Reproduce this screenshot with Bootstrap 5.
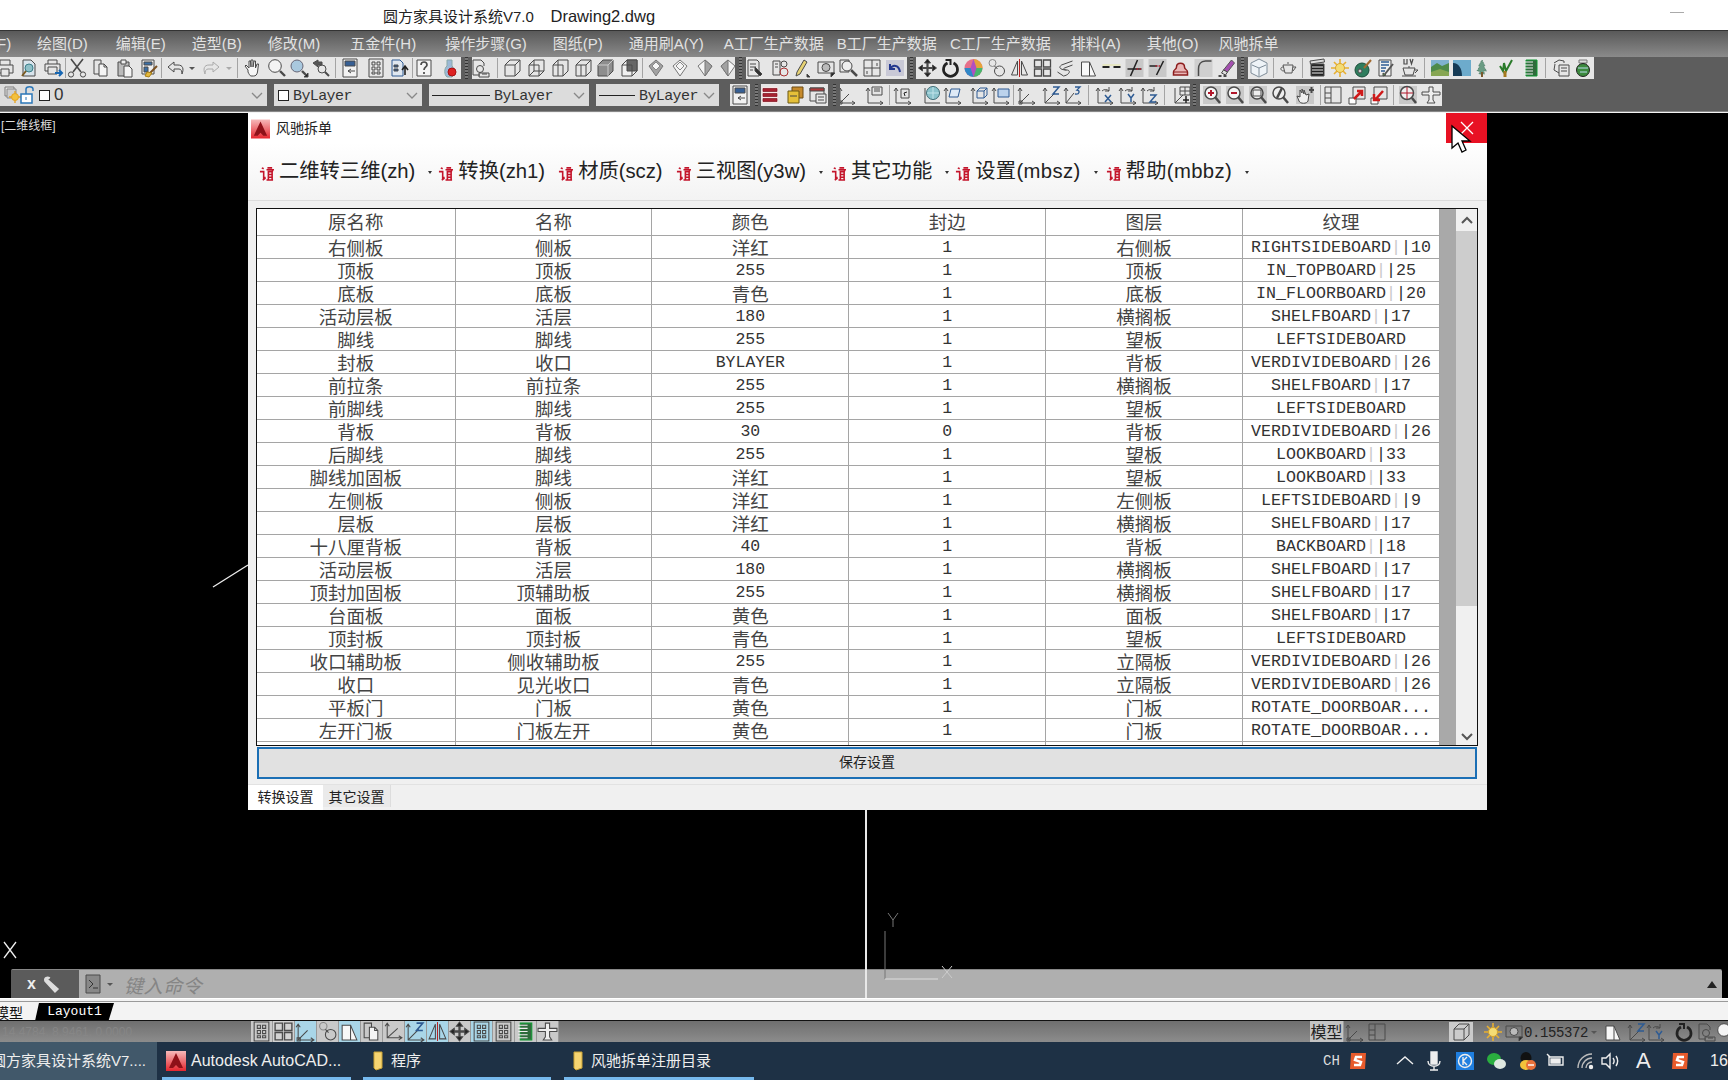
<!DOCTYPE html>
<html lang="zh"><head><meta charset="utf-8"><title>圆方家具设计系统</title>
<link rel="stylesheet" href="https://cdn.jsdelivr.net/npm/bootstrap@5.3.0/dist/css/bootstrap.min.css">
<style>
html,body{height:100%}
body{font-family:"Liberation Sans","Noto Sans CJK SC",sans-serif;background:#000;overflow:hidden;height:1080px;position:relative}
.tbar{height:30px;background:#fff;font:15px/32px "Liberation Sans","Noto Sans CJK SC",sans-serif;color:#222;padding-left:383px;white-space:pre;position:relative}
.tbar i{position:absolute;left:1670px;top:12px;width:14px;height:1px;background:#aaa}
.tbar b{font-weight:400;font-size:16.5px}
.mbar{height:27px;border-top:1px solid #333;background:linear-gradient(#595959,#8a8a8a);color:#e2e2e2;font-size:15px;line-height:25px;white-space:nowrap;padding-left:37px;overflow:hidden;position:relative}
.mbar span{margin-right:26px;font-family:"Liberation Sans","Noto Sans CJK SC",sans-serif}
.mbar .mf{position:absolute;left:-8px;margin:0}
.mbar .w13{margin-right:13px}.mbar .w20{margin-right:20px}.mbar .w28{margin-right:28px}.mbar .w30{margin-right:30px}.mbar .w29{margin-right:29px}
.tools{height:55px;background:#5d5d5d;border-bottom:1px solid #888}
.trow{height:22px;position:absolute;left:0;right:0}
.trow.r1{top:57px}.trow.r2{top:84px}
.seg{height:22px;background:#e6e6e6;overflow:hidden;flex:none;align-items:center;display:flex}
.s1{width:461px}.s2{width:263px}.s3{width:161px}.s4{width:321px}.s5{width:346px}
.c1{width:267px}.c2{width:148px}.c3{width:160px}.c4{width:123px}.c5{width:20px}.c6{width:67px}.c7{width:350px}.c8{width:242px}
.grip{width:11px;height:22px;flex:none;background:repeating-linear-gradient(#333 0 1px,#777 1px 3px) center/3px 100% no-repeat}
.grip.gw8{width:8px}.grip.gw9{width:9px}
.ti{width:24px;height:20px;flex:none;fill:none;stroke:#4a4a4a;stroke-width:1}
.p23 .ti{width:23px}
.sp{width:1px;height:20px;background:#a4a4a4;flex:none;margin-right:-1px}
.dr{width:8px;height:20px;flex:none;fill:#555;stroke:none}
.dr.lt{fill:#aaa}
.hb{background:#cbcbcb}
.g1{margin-left:1px}.g2{margin-left:2px}.g3{margin-left:3px}.g4{margin-left:4px}.g5{margin-left:5px}.g6{margin-left:6px}.g7{margin-left:7px}.g8{margin-left:8px}
.n1{margin-left:-1px}.n2{margin-left:-2px}.n3{margin-left:-3px}.n4{margin-left:-4px}.n5{margin-left:-5px}.n7{margin-left:-7px}.n9{margin-left:-9px}
.cmb{font:15px/22px "Liberation Mono","Noto Sans CJK SC",monospace;color:#333;background:#dcdcdc;position:relative;letter-spacing:-.6px}
.cmb>span{padding-top:3px}
.cmb .chev{position:absolute;right:4px;top:5px;width:12px;height:12px;fill:none;stroke:#888;stroke-width:1.3}
.cmb .sq{width:11px;height:11px;border:1px solid #222;background:#fff;flex:none}
.cmb .ln{height:1px;background:#222;flex:none}
.cmb .zero{font:17px/22px "Liberation Sans",sans-serif;color:#333;padding:0}
.ln58{width:58px}.ln36{width:36px}
.divd{width:7px;flex:none}
.view{position:absolute;left:0;right:0;top:112px;bottom:0;background:#000;border-top:1px solid #f3f3f3}
.vtxt{position:absolute;left:1px;top:4px;color:#ddd;font-size:12px;line-height:18px}
.cross{position:absolute;left:865px;top:113px;height:885px;width:2px;background:#e8e8e8}
.art{position:absolute;left:0;top:113px;width:1728px;height:900px;pointer-events:none}
.cmd{position:absolute;left:11px;top:969px;width:1711px;height:29px;background:#afafaf;border-top:1px solid #888;display:flex;align-items:center;border-radius:2px 2px 0 0}
.cmd .dk{width:68px;height:100%;background:#5b5b5b;color:#eee;display:flex;align-items:center;flex:none}
.cmd em{font:italic 19px "Noto Sans CJK SC",sans-serif;color:#858585;margin-left:10px;letter-spacing:.6px}
.cmd .up{margin-left:auto;margin-right:5px;width:10px;height:8px;fill:#222}
.dlg{position:absolute;left:248px;top:113px;width:1239px;height:697px;background:#f0f0f0;display:flex;flex-direction:column}
.dt{height:30px;background:#fff;font-size:14px;color:#222;display:flex;align-items:center;padding-left:3px;padding-top:1px;flex:none}
.dt svg{margin-right:6px}
.xbtn{position:absolute;right:0;top:0;width:41px;height:30px;background:#e81123;color:#fff;display:flex;align-items:center;justify-content:center}
.dm{height:58px;flex:none;background:linear-gradient(#fff,#f3f3f3);border-bottom:1px solid #dcdcdc;display:flex;align-items:center;font:20.3px/1 "Liberation Sans","Noto Sans CJK SC",sans-serif;color:#222;padding-left:11px;white-space:nowrap}
.dm .rm{width:15px;height:17px;flex:none;margin-right:5px;margin-top:3px;stroke:#c4152b;fill:none;stroke-width:1.7}
.dm .dot{width:4px;height:4px;flex:none;fill:#333;margin-left:13px;margin-right:6px}
.dm .wo{margin-right:13px}
.dm .lsp{letter-spacing:.35px}
.dm .rm.sh2{margin-left:2px}
.frame{margin:7px 9px 0 8px;height:538px;border:1.5px solid #111;background:#fff;display:flex;overflow:hidden;flex:none}
.tblwrap{width:1183px;overflow:hidden;flex:none;height:100%}
.cad-table{table-layout:fixed;width:1183px;border-collapse:collapse;margin:0;font:18.5px/22px "Noto Sans CJK SC",sans-serif;color:#444}
.cad-table th,.cad-table td{border:1px solid #a5a5a5;border-top:0;padding:0;height:23px;text-align:center;font-weight:400;overflow:hidden;white-space:nowrap;color:#444;box-shadow:none;background:#fff}
.cad-table th{height:26px;line-height:24px;vertical-align:top}
.cad-table th:first-child,.cad-table td:first-child{border-left:0;width:198px}
.cad-table td.m{font:16.67px/20px "Liberation Mono",monospace;color:#333;padding-top:2px}
.cad-table td.m b{font-weight:400;color:#c9c9c9}
.cad-table td.n{font:16.5px/20px "Liberation Mono",monospace;color:#333;padding-top:2px}
.band{width:16px;background:#a9a9a9;flex:none}
.sb{width:21px;background:#f0f0f0;flex:none;display:flex;flex-direction:column;position:relative}
.sb svg{width:14px;height:9px;margin:7px auto;fill:none;stroke:#555;stroke-width:2;flex:none}
.sb .th{height:375px;background:#cdcdcd;flex:none;margin-top:-1px}
.sb .dn{margin-top:auto;margin-bottom:4px}
.save{margin:1px 10px 0 9px;height:32px;flex:none;border:2px solid #1b6fb5;background:#e1e1e1;border-radius:0;font:14px/22px "Noto Sans CJK SC",sans-serif;color:#222;padding:0 0 5px;width:1220px}
.save:hover{background:#e1e1e1}
.dtabs{margin-top:5px;border-top:1px solid #e2e2e2;height:26px;display:flex;font-size:14px;color:#222;padding-left:0;line-height:22px;font-family:"Noto Sans CJK SC",sans-serif;flex:none}
.dtabs span{width:75px;text-align:center;background:#fff}
.dtabs span+span{width:68px;background:#eaeaea;border-right:1px solid #ddd;height:22px}
.lay{position:absolute;left:0;right:0;top:998px;height:22px;background:#f3f3f3;border-top:1px solid #fff;display:flex}
.lay::before{content:"";position:absolute;left:0;right:0;top:2px;height:1px;background:#9a9a9a}
.lay .mx{position:absolute;left:-5px;top:4px;font:14px/18px "Noto Sans CJK SC",sans-serif;color:#111}
.lay .lo{position:absolute;left:35px;top:4px;width:79px;height:18px;background:#000;color:#fff;font:13px/18px "Liberation Mono",monospace;text-align:center;clip-path:polygon(5% 0,100% 0,93% 100%,0 100%)}
.stat{position:absolute;left:0;right:0;top:1020px;height:22px;border-top:1px solid #111;background:linear-gradient(#6f6f6f,#8c8c8c);display:flex;align-items:center;overflow:hidden}
.coord{color:#868686;font-size:12px;width:251px;flex:none;padding-left:2px;white-space:nowrap}
.stc{background:#c9c9c9;height:21px;flex:none;display:flex}
.stc .ti{width:22px;height:21px;border-right:1px solid #999}
.stc .on{background:#a9d6e8}
.sts{background:#d2d2d2}
.mdl{width:34px;font:16px/21px "Noto Sans CJK SC",sans-serif;color:#222;text-align:center;flex:none;margin-left:751px;background:#c4c4c4;border-right:1px solid #999}
.g60{margin-left:60px}
.scale{font:14px/21px "Liberation Mono",monospace;color:#222;letter-spacing:-.4px;flex:none;margin-left:-2px;padding-top:3px}
.task{position:absolute;left:0;right:0;top:1042px;height:38px;background:#1e3145;color:#eee;font-size:16px;display:flex;align-items:center}
.tk{height:38px;display:flex;align-items:center;flex:none;white-space:nowrap;overflow:hidden;position:relative;font-family:"Liberation Sans","Noto Sans CJK SC",sans-serif}
.tk::after{content:"";position:absolute;left:2px;right:2px;bottom:0;height:3px;background:#76b9ed}
.t0{width:157px;background:#41586a;margin-right:3px;justify-content:flex-end;font-size:15px;padding-right:11px}
.t0::after{display:none}
.t1{width:193px;padding-left:6px;margin-right:8px}
.t2{width:192px;padding-left:11px;margin-right:9px;font-size:15px}
.t3{width:194px;padding-left:10px;font-size:15px}
.tk svg{flex:none;margin-right:5px}
.tray{display:flex;align-items:center;height:38px;white-space:nowrap;position:absolute;left:1320px;right:0;overflow:hidden}
.tray svg{position:absolute;top:9px;width:20px;height:20px;fill:none;stroke:#eee;stroke-width:1.4}
.tray .chs{position:absolute;left:3px;top:9px;font:14px/20px "Liberation Mono",monospace;color:#ddd}
.tray .big{position:absolute;left:316px;top:7px;font:22px/24px "Liberation Sans",sans-serif;color:#eee}
.tray .hr{position:absolute;left:390px;top:9px;font:16px/20px "Liberation Sans",sans-serif}
.sicon{fill:#e0532a!important;stroke:none!important}
.l14{left:28px}.l85{left:75px}.l114{left:104px}.l145{left:135px}.l175{left:166px}.l206{left:197px}.l236{left:226px}.l265{left:255px}.l290{left:280px}.l350{left:350px}
.nstroke{stroke:none!important}
#curs{left:1450px;top:124px}
</style></head><body>
<svg width="0" height="0" class="position-absolute">
<defs>
<linearGradient id="ar" x1="0" y1="0" x2="0" y2="1"><stop offset="0" stop-color="#f6b9b9"/><stop offset="1" stop-color="#e5262e"/></linearGradient>
<symbol id="print" viewBox="0 0 20 20"><path d="M5 7V2h10v5M6 15H2V7h16v8h-4M6 11h8v7H6z"/></symbol>
<symbol id="docp" viewBox="0 0 20 20"><path d="M4 2h8l4 4v12H4z" fill="#d8e4ec"/><circle cx="10" cy="10" r="4" fill="#8fc0c8" stroke="#3b7f8a"/><path d="M7 13l-4 5" stroke="#7a5a20" stroke-width="2"/></symbol>
<symbol id="pmail" viewBox="0 0 20 20"><path d="M5 6V2h9v4M5 13H2V6h15v6M5 9h9v7H5z"/><path d="M12 15h6M16 12l3 3-3 3" stroke="#1767b3" stroke-width="2"/></symbol>
<symbol id="cut" viewBox="0 0 20 20"><path d="M4 1l10 13M16 1L6 14" stroke-width="1.600"/><ellipse cx="4" cy="16.500" rx="2.600" ry="2.600"/><ellipse cx="16" cy="16.500" rx="2.600" ry="2.600"/></symbol>
<symbol id="copy" viewBox="0 0 20 20"><path d="M3 2h7v14H3z"/><path d="M8 6h5l3 3v9H8z" fill="#f4f4f4"/><path d="M13 6v3h3"/></symbol>
<symbol id="paste" viewBox="0 0 20 20"><path d="M3 4h11v14H3z" fill="#bbb"/><path d="M6 2h5v4H6z" fill="#eee"/><path d="M9 8h5l3 3v8H9z" fill="#f4f4f4"/></symbol>
<symbol id="bdoc" viewBox="0 0 20 20"><path d="M3 2h12v14H3z" fill="#eee"/><path d="M5 4h8v3H5z" fill="#3a6ea5"/><path d="M5 9h4v5H5z" fill="#3a6ea5"/><path d="M18 8l-7 7" stroke="#7a5020" stroke-width="2"/><path d="M8 14l5 1-3 4-4-1z" fill="#e5b93c" stroke="#a97f12"/></symbol>
<symbol id="undo" viewBox="0 0 20 20"><path d="M8 4L2 9l6 5v-3h5c2 0 3 2 3 5 2-5 1-9-4-9H8z"/></symbol>
<symbol id="redo" viewBox="0 0 20 20"><path d="M12 4l6 5-6 5v-3H7c-2 0-3 2-3 5-2-5-1-9 4-9h4z" stroke="#aaa"/></symbol>
<symbol id="tri" viewBox="0 0 8 20"><path d="M1 9h6l-3 3z"/></symbol>
<symbol id="hand" viewBox="0 0 20 20"><path d="M5 12L2 8l1-1 3 3V3h1.500l.5 6V2h2v7l1-6h1.500v7l1.500-4h1.500l-1 8c-.5 3-2 4-4 4H8c-1 0-2-2-3-4z" fill="#f6f6f6"/></symbol>
<symbol id="mag" viewBox="0 0 20 20"><circle cx="8" cy="8" r="6.300" fill="#f4f4f4"/><path d="M13 13l5 5" stroke-width="2.400"/></symbol>
<symbol id="mag2" viewBox="0 0 20 20"><circle cx="8" cy="8" r="6" fill="#a9c8de" stroke="#667"/><path d="M13 13l4 4" stroke-width="2.400"/><path d="M19 15v4h-4z" fill="#222"/></symbol>
<symbol id="zprev" viewBox="0 0 20 20"><path d="M2 5l5-3v2h4v3H7v2z" fill="#555"/><circle cx="11" cy="11" r="4"/><path d="M14 14l4 4" stroke-width="2"/></symbol>
<symbol id="props" viewBox="0 0 20 20"><path d="M3 1h14v18H3z" fill="#f2f2f2"/><path d="M5 3h10v5H5z" fill="#365f94"/><path d="M8 13H15M8 13l3-2M8 13l3 2"/></symbol>
<symbol id="grid" viewBox="0 0 20 20"><path d="M3 1h14v18H3zM6 4h3v3H6zM11 4h3v3h-3zM6 9h3v3H6zM11 9h3v3h-3zM6 14h3v2H6zM11 14h3v2h-3z"/></symbol>
<symbol id="dcar" viewBox="0 0 20 20"><path d="M2 2h8l3 3v13H2z" fill="#dfe7f0" stroke="#2e5b93"/><path d="M4 7h4v2H4zM4 11h4v2H4z" fill="#2e5b93"/><path d="M15 8v9M12 12l3-4 3 4" stroke="#222" stroke-width="1.600"/></symbol>
<symbol id="help" viewBox="0 0 20 20"><path d="M3 2h14v16H3z" fill="#f4f4f4"/><path d="M7 7c0-4 6-4 6 0 0 2-3 2-3 5M10 14v2" stroke-width="1.700"/></symbol>
<symbol id="bott" viewBox="0 0 20 20"><path d="M7 2h5v6c3 2 3 9 0 11H7C4 17 4 10 7 8z" fill="#9db9d6" stroke="#8aa"/><circle cx="12" cy="14" r="4" fill="#d22" stroke="#a11"/></symbol>
<symbol id="dsh" viewBox="0 0 20 20"><path d="M2 2h8l3 3v3M2 2v15h7"/><circle cx="9" cy="11" r="3.500"/><path d="M8 15h10v4H8zM11 16h5"/></symbol>
<symbol id="cb1" viewBox="0 0 20 20"><path d="M3 7l5-5h10v11l-5 5H3zM3 7h10v11M13 7l5-5"/></symbol>
<symbol id="cb2" viewBox="0 0 20 20"><path d="M3 7l5-5h10v11l-5 5H3zM3 18l5-5h10M8 2v11"/><path d="M3 7h10v11"/></symbol>
<symbol id="cb3" viewBox="0 0 20 20"><path d="M3 7l5-5h10v11l-5 5H3zM3 7h10v11M8 2l0 16"/></symbol>
<symbol id="cb4" viewBox="0 0 20 20"><path d="M3 7l5-5h10v11l-5 5H3zM13 7v11M13 7l5-5M3 7h10"/><path d="M8 7v11"/></symbol>
<symbol id="cb5" viewBox="0 0 20 20"><path d="M3 7l5-5h10v11l-5 5H3z" fill="#8e8e8e"/><path d="M3 7h10v11M13 7l5-5" stroke="#ccc"/></symbol>
<symbol id="cb6" viewBox="0 0 20 20"><path d="M3 7l5-5h10v11l-5 5H3z" fill="#f0f0f0"/><path d="M8 2h10v11H8z" fill="#666"/><path d="M3 7h10v11"/></symbol>
<symbol id="di1" viewBox="0 0 20 20"><path d="M10 2l7 6-7 10-7-10z" fill="#a2a2a2" stroke="#777"/><path d="M6 8l4-4 4 4-4 4z" fill="#f5f5f5" stroke="#888"/></symbol>
<symbol id="di2" viewBox="0 0 20 20"><path d="M10 2l7 6-7 10-7-10z" fill="#f5f5f5" stroke="#777"/><path d="M10 4l4 4-4 4-4-4z" fill="#f5f5f5" stroke="#888"/></symbol>
<symbol id="di3" viewBox="0 0 20 20"><path d="M10 2l7 6-7 10-7-10z" fill="#f5f5f5" stroke="#777"/><path d="M10 2l7 6-7 10z" fill="#a2a2a2" stroke="#777"/></symbol>
<symbol id="di4" viewBox="0 0 20 20"><path d="M10 2l7 6-7 10-7-10z" fill="#f5f5f5" stroke="#777"/><path d="M10 2L3 8l7 10z" fill="#a2a2a2" stroke="#777"/></symbol>
<symbol id="lst" viewBox="0 0 20 20"><path d="M4 2h9l2 2v14H4zM6 6h6M6 9h6M6 12h3"/><path d="M11 9l7 7-2 2-5-5z" fill="#333"/></symbol>
<symbol id="lwh" viewBox="0 0 20 20"><path d="M3 3h7v14H3zM5 6h3M5 9h3"/><circle cx="14" cy="6" r="3"/><circle cx="14" cy="14" r="4" stroke="#a33"/></symbol>
<symbol id="pen" viewBox="0 0 20 20"><path d="M12 2l3 2-7 12-4 2 1-4z" fill="#e6d273"/><path d="M15 16v3h3z" fill="#222"/></symbol>
<symbol id="cam" viewBox="0 0 20 20"><path d="M2 4h16v11H2z"/><circle cx="10" cy="9.500" r="4" fill="#bbb"/><path d="M15 15v4l4-4z" fill="#222"/></symbol>
<symbol id="magb" viewBox="0 0 20 20"><path d="M2 2h9v12H2z"/><circle cx="9" cy="8" r="5" fill="#eee"/><path d="M13 12l6 6" stroke-width="2.500"/></symbol>
<symbol id="win4" viewBox="0 0 20 20"><path d="M2 2h16v16H2zM10 2v16M2 10h16M5 13v3M15 5v3"/></symbol>
<symbol id="lundo" viewBox="0 0 20 20"><path d="M1 2h18v16H1z" fill="#c9c9d6" stroke="none"/><path d="M5 6v5h5M5 11c3-5 9-4 10 3" stroke="#24388f" stroke-width="2"/></symbol>
<symbol id="move" viewBox="0 0 20 20"><path d="M10 2v16M2 10h16" stroke-width="2.200"/><path d="M10 1l-3 4h6zM10 19l-3-4h6zM1 10l4-3v6zM19 10l-4-3v6z" fill="#222"/></symbol>
<symbol id="rot" viewBox="0 0 20 20"><path d="M7 5a7 7 0 1 0 6 0" stroke-width="2.700" stroke="#222"/><path d="M5 2h5v5" stroke-width="2" stroke="#222"/></symbol>
<symbol id="whl" viewBox="0 0 20 20"><circle cx="10" cy="10" r="9" fill="#e6708a" stroke="none"/><path d="M10 10V1a9 9 0 0 1 9 9z" fill="#e6a33a" stroke="none"/><path d="M10 10h9a9 9 0 0 1-9 9z" fill="#47b66c" stroke="none"/><path d="M10 10v9a9 9 0 0 1-9-9z" fill="#2f87c7" stroke="none"/><path d="M10 1l3 9-3 9-3-9z" fill="#b24fc0" stroke="none"/></symbol>
<symbol id="cpo" viewBox="0 0 20 20"><circle cx="6" cy="5" r="3.500" stroke="#888"/><circle cx="13" cy="13" r="5"/><path d="M8 8l3 3"/></symbol>
<symbol id="mir" viewBox="0 0 20 20"><path d="M8 3L2 17h6zM12 3l6 14h-6z"/><path d="M10 1v18" stroke="#b22"/></symbol>
<symbol id="arr" viewBox="0 0 20 20"><path d="M2 2h7v7H2zM11 2h7v7h-7zM2 11h7v7H2zM11 11h7v7h-7z" stroke-width="1.300"/></symbol>
<symbol id="ofs" viewBox="0 0 20 20"><path d="M17 3L6 7c-4 3 0 5 5 5s3 5-3 6M17 7l-8 3c-2 1 0 2 2 2"/><path d="M2 14l6 4"/></symbol>
<symbol id="str" viewBox="0 0 20 20"><path d="M3 4h8l6 14H3z" fill="#f8f8f8"/><path d="M11 4v14"/></symbol>
<symbol id="dash" viewBox="0 0 20 20"><path d="M1 9h7M12 9h7" stroke-width="2" stroke="#222"/><path d="M1 7h18" stroke="#e6e6a0" stroke-width="1"/></symbol>
<symbol id="trm" viewBox="0 0 20 20"><path d="M1 1h18v18H1z" fill="#c8c8c8" stroke="none"/><path d="M3 11h14" stroke="#222" stroke-width="1.500"/><path d="M13 2L6 18" stroke="#222" stroke-width="1.500"/><path d="M12 11h6" stroke="#b23" stroke-dasharray="1.500 1.500" stroke-width="1.500"/></symbol>
<symbol id="ext" viewBox="0 0 20 20"><path d="M1 1h18v18H1z" fill="#c8c8c8" stroke="none"/><path d="M2 8h8" stroke="#222" stroke-width="1.500"/><path d="M16 3L9 17" stroke="#222" stroke-width="1.500"/><path d="M8 8h6" stroke="#b23" stroke-dasharray="1.500 1.500" stroke-width="1.500"/></symbol>
<symbol id="stamp" viewBox="0 0 20 20"><path d="M3 17v-3c0-3 3-2 3-5 0-5 8-5 8 0 0 3 3 2 3 5v3z" fill="#e9b6b6" stroke="#8d1e1e" stroke-width="1.500"/><path d="M3 14h14" stroke="#8d1e1e"/></symbol>
<symbol id="fil" viewBox="0 0 20 20"><path d="M1 1h18v18H1z" fill="#cfcfcf" stroke="none"/><path d="M18 3h-6c-5 0-7 4-7 8v7" stroke-width="1.500"/></symbol>
<symbol id="ers" viewBox="0 0 20 20"><path d="M7 12L15 2l3 3-7 9z" fill="#a44fb0" stroke="#555"/><path d="M7 12l4 2-2 3-4-2z" fill="#ddd"/><path d="M2 18h3M7 18h3" stroke-width="2"/></symbol>
<symbol id="box" viewBox="0 0 20 20"><path d="M10 1l8 4v10l-8 4-8-4V5z" fill="#eef3f7" stroke="#7e8c98"/><path d="M3 7l7 3 7-3M10 10v8" stroke="#7e8c98"/></symbol>
<symbol id="tea" viewBox="0 0 20 20"><path d="M5 7h10l-1 8H7zM15 9h3l-3 4M5 9c-3 0-3 4 1 4M9 5h2" stroke="#555"/></symbol>
<symbol id="clp" viewBox="0 0 20 20"><path d="M4 6h13v12H4z" fill="#222"/><path d="M3 3l14-2 .5 3-14 2z" fill="#ddd"/><path d="M5 9h11M5 12h11M5 15h11" stroke="#eee"/></symbol>
<symbol id="sun" viewBox="0 0 20 20"><circle cx="10" cy="10" r="4.500" fill="#f4dc75" stroke="#d9a428"/><path d="M10 1v4M10 15v4M1 10h4M15 10h4M4 4l3 3M13 13l3 3M16 4l-3 3M7 13l-3 3" stroke="#e8b030" stroke-width="1.600"/></symbol>
<symbol id="pnt" viewBox="0 0 20 20"><ellipse cx="9" cy="12" rx="7" ry="7" fill="#2f7d5e" stroke="#1b4d3a"/><circle cx="7" cy="13" r="2" fill="#ccc"/><path d="M11 10l7-8" stroke="#a26a30" stroke-width="2"/></symbol>
<symbol id="dbr" viewBox="0 0 20 20"><path d="M3 2h12v16H3z" fill="#f0f0f0"/><path d="M5 4h8M5 7h8M5 10h5M5 13h4" stroke="#2e5b93" stroke-width="1.500"/><path d="M9 16l8-10" stroke="#555" stroke-width="2"/><path d="M7 15l3 2-3 1z" fill="#5a9e46"/></symbol>
<symbol id="uvt" viewBox="0 0 20 20"><path d="M4 10h12l-2 7H6zM3 18h14M10 8v2M16 12h3l-3 3"/><path d="M5 1v5h3V1M11 1l1.500 5L14 1" stroke-width="1.200"/></symbol>
<symbol id="lnd" viewBox="0 0 20 20"><path d="M1 2h18v16H1z" fill="#7fb1d0" stroke="none"/><path d="M1 9l6-4 5 3 7-3v13H1z" fill="#4e8a4b" stroke="none"/><path d="M1 14l9-3 9 3v4H1z" fill="#87a653" stroke="none"/></symbol>
<symbol id="lnd2" viewBox="0 0 20 20"><path d="M1 2h18v16H1z" fill="#6dabcc" stroke="none"/><path d="M1 18V5c6 0 9 6 9 13z" fill="#153a55" stroke="none"/></symbol>
<symbol id="tr1" viewBox="0 0 20 20"><path d="M10 2l3 6-1.500 0 3 5-3 0 1 3H7l1-3-3 0 3-5-1.500 0z" fill="#6b9c84" stroke="#4e7d67" stroke-dasharray="1 1"/><path d="M10 14v5" stroke="#7b5a2f" stroke-width="2"/></symbol>
<symbol id="tr2" viewBox="0 0 20 20"><path d="M5 8l3 5 1-8 2 8 6-11" stroke="#2a7a2a" stroke-width="2"/><path d="M10 13v6" stroke="#a5791f" stroke-width="3"/></symbol>
<symbol id="lbk" viewBox="0 0 20 20"><path d="M5 2h11v16H5z" fill="#2f6b3c" stroke="#193"/><path d="M3 4h9M3 7h9M3 10h9M3 13h9M3 16h9" stroke="#eee"/></symbol>
<symbol id="cup" viewBox="0 0 20 20"><path d="M3 5l5-3 5 1v2M4 6l-1 6 5 3M8 7h10v11H8z"/><path d="M10 10h6M10 13h6"/></symbol>
<symbol id="glb" viewBox="0 0 20 20"><path d="M6 2h8v3H6z" fill="#ddd" stroke="#777"/><circle cx="10" cy="12" r="6.500" fill="#3c8a3e" stroke="#222"/><path d="M5 10h10M7 14h7" stroke="#bde"/></symbol>
<symbol id="ly0" viewBox="0 0 20 20"><path d="M2 2h9v9H2z" fill="#e4e4e4" stroke="#7d7d7d"/><path d="M4 4h9v9H4z" fill="#cfcfcf" stroke="#8a8a8a"/><circle cx="12" cy="12" r="3.500" fill="#f2c13f" stroke="#e7a21a"/><path d="M12 6v2M12 16v2M6 12h2M16 12h2" stroke="#e7a21a" stroke-width="1.300"/></symbol>
<symbol id="lck" viewBox="0 0 20 20"><path d="M3 9h11v9H3z" fill="#fff" stroke="#2b77b8" stroke-width="1.500"/><path d="M8 9V4c0-3 7-3 7 0v2" stroke="#2b77b8" stroke-width="1.500"/><path d="M8 12v3" stroke="#2b77b8"/></symbol>
<symbol id="lyr1" viewBox="0 0 20 20"><path d="M2 2h16v16H2z" fill="#f7e4e4" stroke="none"/><path d="M3 3.500h14v3H3zM3 8.500h14v3H3zM3 13.500h14v3H3z" fill="#a8202f" stroke="#7d1220" stroke-width=".7"/></symbol>
<symbol id="lyr2" viewBox="0 0 20 20"><path d="M7 2h11v11H7z" fill="#c68a2b" stroke="#6b4a14"/><path d="M3 6h11v12H3z" fill="#e5c039" stroke="#6b5914"/><path d="M5 11h7" stroke="#444"/></symbol>
<symbol id="lyr3" viewBox="0 0 20 20"><path d="M3 3h14v13H3z"/><path d="M3 3h14v3H3z" fill="#b03a3a"/><path d="M9 9h10v9H9z" fill="#e8e8e8"/><path d="M11 12h6M11 15h6"/></symbol>
<symbol id="ucs" viewBox="0 0 20 20"><path d="M4 2v14h14M2 5l2-3 2 3M15 14l3 2-3 2M4 16l10-9"/></symbol>
<symbol id="ucd" viewBox="0 0 20 20"><path d="M3 3v15h15M1 6l2-3 2 3M15 16l3 2-3 2"/><path d="M7 2h10v8H7zM9 4h6M9 6h6"/></symbol>
<symbol id="ucu" viewBox="0 0 20 20"><path d="M3 3v15h15M1 6l2-3 2 3M15 16l3 2-3 2"/><path d="M8 4h8v9H8z"/><path d="M14 7l-3 1 1 3" stroke="#222"/></symbol>
<symbol id="ucg" viewBox="0 0 20 20"><path d="M3 3v15h15"/><circle cx="11" cy="8" r="6.500" fill="#8cc3cc" stroke="#3d6b75"/><path d="M5 8h12M11 2v12" stroke="#c2e4ea"/></symbol>
<symbol id="ucb" viewBox="0 0 20 20"><path d="M3 3v15h15M1 6l2-3 2 3M15 16l3 2-3 2"/><path d="M8 4h9l-2 8H6z" fill="#dfeaf6" stroke="#2e5b93"/></symbol>
<symbol id="ucc" viewBox="0 0 20 20"><path d="M3 3v15h15M1 6l2-3 2 3M15 16l3 2-3 2"/><path d="M7 6l3-3h7v7l-3 3H7zM7 6h7v7M14 6l3-3" stroke="#2e5b93"/></symbol>
<symbol id="ucf" viewBox="0 0 20 20"><path d="M3 3v15h15M1 6l2-3 2 3M15 16l3 2-3 2"/><path d="M7 4h11v8H7z" fill="#bcd3ec" stroke="#2e5b93"/></symbol>
<symbol id="uc1" viewBox="0 0 20 20"><path d="M3 3v15h15M1 6l2-3 2 3M15 16l3 2-3 2M3 18l9-9"/><path d="M2 16h3v3H2z"/></symbol>
<symbol id="ucz" viewBox="0 0 20 20"><path d="M3 3v15h15M1 6l2-3 2 3M15 16l3 2-3 2M3 18L13 8"/><path d="M11 2h6l-6 7h6" stroke="#2e5b93" stroke-width="1.500"/></symbol>
<symbol id="uc3" viewBox="0 0 20 20"><path d="M3 3v15h15M1 6l2-3 2 3M15 16l3 2-3 2M3 18L11 8"/><path d="M12 2h5l-3 3c3 0 3 5-2 4" stroke="#2e5b93" stroke-width="1.300"/></symbol>
<symbol id="ucx" viewBox="0 0 20 20"><path d="M3 3v15h15M1 6l2-3 2 3M15 16l3 2-3 2M7 6a5 5 0 0 1 7 0M14 2v4h-4"/><path d="M10 10l6 7M16 10l-6 7" stroke="#2e5b93" stroke-width="1.500"/></symbol>
<symbol id="ucy" viewBox="0 0 20 20"><path d="M3 3v15h15M1 6l2-3 2 3M15 16l3 2-3 2M7 6a5 5 0 0 1 7 0M14 2v4h-4"/><path d="M10 9l3 4 3-4M13 13v4" stroke="#2e5b93" stroke-width="1.500"/></symbol>
<symbol id="ucw" viewBox="0 0 20 20"><path d="M3 3v15h15M1 6l2-3 2 3M15 16l3 2-3 2M7 6a5 5 0 0 1 7 0M14 2v4h-4"/><path d="M10 10h6l-6 7h6" stroke="#2e5b93" stroke-width="1.500"/></symbol>
<symbol id="ucn" viewBox="0 0 20 20"><path d="M3 3v15h15M3 18l8-8"/><path d="M8 2h10v8H8zM13 2v8M8 6h10"/><path d="M11 15h6M14 11v7" stroke="#222" stroke-width="1.500"/></symbol>
<symbol id="zin" viewBox="0 0 20 20"><path d="M1 1h18v18H1z" fill="#c9c9c9" stroke="none"/><circle cx="9" cy="8" r="6" fill="#f5f5f5" stroke-width="1.500"/><path d="M13 12l5 6" stroke-width="2.500"/><path d="M6 8h6M9 5v6" stroke="#b1172b" stroke-width="2"/></symbol>
<symbol id="zou" viewBox="0 0 20 20"><path d="M1 1h18v18H1z" fill="#c9c9c9" stroke="none"/><circle cx="9" cy="8" r="6" fill="#f5f5f5" stroke-width="1.500"/><path d="M13 12l5 6" stroke-width="2.500"/><path d="M6 8h6" stroke="#b1172b" stroke-width="2"/></symbol>
<symbol id="zal" viewBox="0 0 20 20"><path d="M1 1h18v18H1z" fill="#c9c9c9" stroke="none"/><circle cx="9" cy="8" r="6" fill="#eee" stroke-width="1.500"/><path d="M13 12l5 6" stroke-width="2.500"/><path d="M5 5h8v6H5z"/></symbol>
<symbol id="zex" viewBox="0 0 20 20"><circle cx="9" cy="8" r="6" fill="#eee" stroke-width="1.500"/><path d="M13 12l5 6" stroke-width="2.500"/><path d="M12 3L7 13" stroke-width="2.500"/></symbol>
<symbol id="zpn" viewBox="0 0 20 20"><path d="M1 1h18v18H1z" fill="#c9c9c9" stroke="none"/><path d="M4 16l-2-5 3 1V5l2 3V4l2 5V5l2 5 3-1-1 7c-1 3-8 3-9 0z" fill="#eee"/><path d="M14 5h5M16.500 2v6" stroke-width="2"/></symbol>
<symbol id="vp2" viewBox="0 0 20 20"><path d="M2 2h16v16H2zM8 2v16M2 8h6M2 13h6"/></symbol>
<symbol id="mup" viewBox="0 0 20 20"><path d="M6 2h12v12H6z"/><path d="M2 13h7v6H2z" fill="#fff"/><path d="M7 14l7-7M10 6h5v5" stroke="#cf1a1a" stroke-width="2.500"/></symbol>
<symbol id="mdn" viewBox="0 0 20 20"><path d="M5 2h13v12H5z"/><path d="M2 13h7v6H2z" fill="#fff"/><path d="M14 6l-8 9M5 9v6h6" stroke="#cf1a1a" stroke-width="2.500"/></symbol>
<symbol id="ztg" viewBox="0 0 20 20"><path d="M1 1h18v18H1z" fill="#c9c9c9" stroke="none"/><circle cx="9" cy="8" r="6.500" fill="#f0f0f0" stroke-width="1.500"/><path d="M3 8h12M9 2v12" stroke="#b1172b"/><path d="M14 13l4 5" stroke-width="2.500"/></symbol>
<symbol id="plane" viewBox="0 0 20 20"><path d="M8 2h4v5h7v3h-7v5l2 3H6l2-3v-5H1V7h7z" fill="#eee"/></symbol>
<symbol id="rma" viewBox="0 0 16 18"><path d="M3 3l2 1M1 7h4v7l2-1M4 16l3-2M9 3l5 0M8 5h7l-1 2M10 7l4 0v9h-4zM10 10h4M10 13h4M8 16h7"/></symbol>
<symbol id="acad" viewBox="0 0 20 20"><path d="M0 0h20v20H0z" fill="url(#ar)" stroke="none"/><path d="M10 2L3 17h4l3-3 3 3h4z" fill="#8e1118" stroke="none"/></symbol>
<symbol id="fold" viewBox="0 0 14 20"><path d="M2 1h8v16l-6 2-2-2z" fill="#f5d471" stroke="#c9a234"/></symbol>
<symbol id="sdg" viewBox="0 0 20 20"><path d="M3 2h15l-1 16H2z" fill="#e85b2c" stroke="none"/><path d="M14 6H8L7 9l6 2-1 3H6" stroke="#fff" stroke-width="2.500" fill="none"/></symbol>
</defs></svg>

<div class="tbar">圆方家具设计系统V7.0    <b>Drawing2.dwg</b><i></i></div>
<div class="mbar"><span class="mf">(F)</span><span class="w28">绘图(D)</span><span>编辑(E)</span><span>造型(B)</span><span class="w30">修改(M)</span><span class="w29">五金件(H)</span><span>操作步骤(G)</span><span>图纸(P)</span><span class="w20">通用刷A(Y)</span><span class="w13">A工厂生产数据</span><span class="w13">B工厂生产数据</span><span class="w20">C工厂生产数据</span><span>排料(A)</span><span class="w20">其他(O)</span><span>风驰拆单</span></div>
<div class="tools"></div>

<div class="trow r1 d-flex">
 <div class="seg s1"><svg class="ti n7"><use href="#print"/></svg><svg class="ti"><use href="#docp"/></svg><svg class="ti"><use href="#pmail"/></svg><i class="sp"></i><svg class="ti"><use href="#cut"/></svg><svg class="ti"><use href="#copy"/></svg><svg class="ti"><use href="#paste"/></svg><svg class="ti"><use href="#bdoc"/></svg><i class="sp"></i><svg class="ti g3"><use href="#undo"/></svg><svg class="dr"><use href="#tri"/></svg><svg class="ti g3"><use href="#redo"/></svg><svg class="dr lt g2"><use href="#tri"/></svg><i class="sp g4"></i><svg class="ti g4"><use href="#hand"/></svg><svg class="ti"><use href="#mag"/></svg><svg class="ti n2"><use href="#mag2"/></svg><svg class="ti n2"><use href="#zprev"/></svg><i class="sp g2"></i><svg class="ti g3"><use href="#props"/></svg><svg class="ti g2"><use href="#grid"/></svg><svg class="ti"><use href="#dcar"/></svg><i class="sp"></i><svg class="ti"><use href="#help"/></svg><svg class="ti g2"><use href="#bott"/></svg></div>
 <div class="grip"></div>
 <div class="seg s2"><svg class="ti n3"><use href="#dsh"/></svg><i class="sp g4"></i><svg class="ti g3"><use href="#cb1"/></svg><svg class="ti"><use href="#cb2"/></svg><svg class="ti"><use href="#cb3"/></svg><svg class="ti n1"><use href="#cb4"/></svg><svg class="ti n2"><use href="#cb5"/></svg><svg class="ti"><use href="#cb6"/></svg><i class="sp g1"></i><svg class="ti g2"><use href="#di1"/></svg><svg class="ti"><use href="#di2"/></svg><svg class="ti g1"><use href="#di3"/></svg><svg class="ti n1"><use href="#di4"/></svg></div>
 <div class="grip"></div>
 <div class="seg s3"><svg class="ti n4"><use href="#lst"/></svg><svg class="ti g2"><use href="#lwh"/></svg><svg class="ti n2"><use href="#pen"/></svg><svg class="ti"><use href="#cam"/></svg><svg class="ti n2"><use href="#magb"/></svg><svg class="ti"><use href="#win4"/></svg><svg class="ti n1"><use href="#lundo"/></svg></div>
 <div class="grip gw9"></div>
 <div class="seg s4 p23"><svg class="ti"><use href="#move"/></svg><svg class="ti"><use href="#rot"/></svg><svg class="ti"><use href="#whl"/></svg><svg class="ti"><use href="#cpo"/></svg><svg class="ti"><use href="#mir"/></svg><svg class="ti"><use href="#arr"/></svg><svg class="ti"><use href="#ofs"/></svg><svg class="ti"><use href="#str"/></svg><svg class="ti"><use href="#dash"/></svg><svg class="ti"><use href="#trm"/></svg><svg class="ti"><use href="#ext"/></svg><svg class="ti"><use href="#stamp"/></svg><svg class="ti"><use href="#fil"/></svg><svg class="ti"><use href="#ers"/></svg></div>
 <div class="grip"></div>
 <div class="seg s5"><svg class="ti n1"><use href="#box"/></svg><i class="sp g2"></i><svg class="ti g3"><use href="#tea"/></svg><i class="sp g2"></i><svg class="ti g3"><use href="#clp"/></svg><svg class="ti n1"><use href="#sun"/></svg><svg class="ti n1"><use href="#pnt"/></svg><svg class="ti n1"><use href="#dbr"/></svg><svg class="ti n1"><use href="#uvt"/></svg><i class="sp g3"></i><svg class="ti g4"><use href="#lnd"/></svg><svg class="ti n2"><use href="#lnd2"/></svg><svg class="ti n4"><use href="#tr1"/></svg><svg class="ti n1"><use href="#tr2"/></svg><svg class="ti g2"><use href="#lbk"/></svg><i class="sp g2"></i><svg class="ti g4"><use href="#cup"/></svg><svg class="ti n2"><use href="#glb"/></svg></div>
</div>

<div class="trow r2 d-flex">
 <div class="seg cmb c1"><svg class="ti g1"><use href="#ly0"/></svg><svg class="ti n9"><use href="#lck"/></svg><i class="sq n1"></i><span class="zero ms-1">0</span><svg class="chev"><path d="M1 4l5 5 5-5"/></svg></div><div class="divd"></div>
 <div class="seg cmb c2"><i class="sq g4 me-1"></i><span>ByLayer</span><svg class="chev"><path d="M1 4l5 5 5-5"/></svg></div><div class="divd"></div>
 <div class="seg cmb c3"><i class="ln ln58 g3 me-1"></i><span>ByLayer</span><svg class="chev"><path d="M1 4l5 5 5-5"/></svg></div><div class="divd"></div>
 <div class="seg cmb c4"><i class="ln ln36 g3 me-1"></i><span>ByLayer</span><svg class="chev"><path d="M1 4l5 5 5-5"/></svg></div><div class="divd"></div>
 <div class="seg c5 ms-1"><svg class="ti n2"><use href="#props"/></svg></div>
 <div class="grip gw8 g2"></div>
 <div class="seg c6 g1"><svg class="ti n3"><use href="#lyr1"/></svg><svg class="ti g1"><use href="#lyr2"/></svg><svg class="ti n2"><use href="#lyr3"/></svg></div>
 <div class="grip gw8 g2"></div>
 <div class="seg c7 g2"><svg class="ti n5"><use href="#uc1"/></svg><svg class="ti g4"><use href="#ucd"/></svg><i class="sp g2"></i><svg class="ti g2"><use href="#ucu"/></svg><svg class="ti g5"><use href="#ucg"/></svg><svg class="ti n3"><use href="#ucb"/></svg><svg class="ti g3"><use href="#ucc"/></svg><svg class="ti n3"><use href="#ucf"/></svg><i class="sp"></i><svg class="ti g2"><use href="#uc1"/></svg><svg class="ti g1"><use href="#ucz"/></svg><svg class="ti n3"><use href="#uc3"/></svg><i class="sp g3"></i><svg class="ti g5"><use href="#ucx"/></svg><svg class="ti n1"><use href="#ucy"/></svg><svg class="ti n2"><use href="#ucw"/></svg><i class="sp g2"></i><svg class="ti g6"><use href="#ucn"/></svg></div>
 <div class="grip gw8"></div>
 <div class="seg c8 g2"><svg class="ti"><use href="#zin"/></svg><svg class="ti n1"><use href="#zou"/></svg><svg class="ti n1"><use href="#zal"/></svg><svg class="ti n2"><use href="#zex"/></svg><svg class="ti g1"><use href="#zpn"/></svg><i class="sp g3"></i><svg class="ti g1"><use href="#vp2"/></svg><svg class="ti"><use href="#mup"/></svg><svg class="ti n2"><use href="#mdn"/></svg><i class="sp g2"></i><svg class="ti g3"><use href="#ztg"/></svg><svg class="ti n1"><use href="#plane"/></svg></div>
</div>

<div class="view">
 <div class="vtxt">[二维线框]</div>
</div>

<div class="cmd"><div class="dk"><span class="ms-3 fw-bold">x</span><svg class="ti ms-1"><path d="M10 4c-3-2-6 0-5 3l10 11 3-3L8 6" fill="#ddd" stroke="#ddd" stroke-width="1.500"/></svg></div><svg class="ti n2 ms-1"><path d="M3 1h14v18H3z" fill="#888"/><path d="M6 6l4 4-4 4M10 14h5" stroke="#333"/></svg><svg class="dr n1"><use href="#tri"/></svg><em>键入命令</em><svg class="up"><path d="M0 8l5-7 5 7z"/></svg></div>

<div class="cross"></div>
<svg class="art" viewBox="0 0 1728 900"><path d="M213 474l35-22" stroke="#eee" stroke-width="1.300"/><path d="M4 829l12 16M16 829L4 845" stroke="#eee" stroke-width="1.300"/><path d="M885 818v48" stroke="#777" fill="none"/><path d="M885 866h53" stroke="#ddd" fill="none"/><path d="M888 800l5 7 5-7M893 807v7" stroke="#777" fill="none"/><path d="M942 853l10 12M952 853l-10 12" stroke="#ccc" fill="none"/></svg>

<div class="lay"><span class="mx">模型</span><span class="lo">Layout1</span></div>

<div class="stat"><div class="coord">14.4784, 8.9461, 0.0000</div>
 <div class="stc"><svg class="ti"><use href="#grid"/></svg><svg class="ti sts"><use href="#arr"/></svg><svg class="ti on"><use href="#uc1"/></svg><svg class="ti"><use href="#cpo"/></svg><svg class="ti on"><use href="#str"/></svg><svg class="ti"><use href="#copy"/></svg><svg class="ti"><use href="#ucs"/></svg><svg class="ti on"><use href="#ucz"/></svg><svg class="ti on"><use href="#mir"/></svg><svg class="ti"><use href="#move"/></svg><svg class="ti on"><use href="#grid"/></svg><svg class="ti"><use href="#grid"/></svg><svg class="ti"><use href="#lbk"/></svg><svg class="ti"><use href="#plane"/></svg></div>
 <div class="mdl">模型</div><svg class="ti n1"><use href="#uc1"/></svg><svg class="ti n2"><use href="#vp2"/></svg>
 <svg class="ti hb g60"><use href="#cb1"/></svg>
 <svg class="ti g8"><use href="#sun"/></svg><svg class="ti n3"><use href="#cam"/></svg><span class="scale">0.155372</span><svg class="dr g2"><use href="#tri"/></svg><svg class="ti g3"><use href="#str"/></svg><svg class="ti"><use href="#ucz"/></svg><svg class="ti n5"><use href="#ucy"/></svg><svg class="ti g4"><use href="#rot"/></svg><svg class="ti n1"><use href="#dsh"/></svg><svg class="ti n5"><use href="#mag"/></svg>
</div>

<div class="task">
 <div class="tk t0"><span>圆方家具设计系统V7....</span></div>
 <div class="tk t1"><svg width="20" height="22"><use href="#acad"/></svg>Autodesk AutoCAD...</div>
 <div class="tk t2"><svg width="14" height="20"><use href="#fold"/></svg>程序</div>
 <div class="tk t3"><svg width="14" height="20"><use href="#fold"/></svg>风驰拆单注册目录</div>
 <div class="tray"><span class="chs">CH</span><svg class="l14 sicon"><use href="#sdg"/></svg>
  <svg class="l85"><path d="M2 13l8-7 8 7"/></svg>
  <svg class="l114"><path d="M7 1h6v12H7z" fill="#eee"/><path d="M4 10c0 7 12 7 12 0M10 16v3M6 19h8"/></svg>
  <svg class="l145"><path d="M1 1h18v18H1z" fill="#1f7fe0" stroke="none"/><circle cx="10" cy="10" r="6.500"/><path d="M8 6v8M12 6l-4 4 4 4"/></svg>
  <svg class="l175"><ellipse cx="8" cy="8" rx="7" ry="6" fill="#2aae3f" stroke="none"/><ellipse cx="14" cy="13" rx="6" ry="5" fill="#dfe8e0" stroke="none"/></svg>
  <svg class="l206 nstroke"><ellipse cx="9" cy="7" rx="5.500" ry="6" fill="#111"/><ellipse cx="9" cy="14" rx="6" ry="5" fill="#f3c23a"/><circle cx="14" cy="14" r="5" fill="#e8703a"/><path d="M11 14h6" stroke="#fff"/></svg>
  <svg class="l236"><path d="M3 6h14v8H3z"/><path d="M5 8h9v4H5z" fill="#eee"/><path d="M1 3l3 3"/></svg>
  <svg class="l265"><path d="M3 17a14 14 0 0 1 14-14M7 17a10 10 0 0 1 10-10M11 17a6 6 0 0 1 6-6" stroke="#bbb"/><circle cx="16" cy="16" r="1.500" fill="#eee"/></svg>
  <svg class="l290"><path d="M2 7h4l4-4v14l-4-4H2zM13 7c1.500 2 1.500 4 0 6M16 5c2 3 2 7 0 10"/></svg>
  <span class="big">A</span><svg class="l350 sicon"><use href="#sdg"/></svg><span class="hr">16</span>
 </div>
</div>

<div class="dlg">
 <div class="dt"><svg width="19" height="20"><use href="#acad"/></svg>风驰拆单</div>
 <div class="xbtn"><svg width="14" height="14" fill="none" stroke="#fff" stroke-width="1.300"><path d="M1 1l12 12M13 1L1 13"/></svg></div>
 <div class="dm">
  <svg class="rm"><use href="#rma"/></svg><span>二维转三维(zh)</span><svg class="dot"><path d="M0 1h4L2 4z"/></svg>
  <svg class="rm"><use href="#rma"/></svg><span class="wo">转换(zh1)</span>
  <svg class="rm"><use href="#rma"/></svg><span class="wo">材质(scz)</span>
  <svg class="rm"><use href="#rma"/></svg><span>三视图(y3w)</span><svg class="dot"><path d="M0 1h4L2 4z"/></svg>
  <svg class="rm sh2"><use href="#rma"/></svg><span>其它功能</span><svg class="dot"><path d="M0 1h4L2 4z"/></svg>
  <svg class="rm"><use href="#rma"/></svg><span class="lsp">设置(mbsz)</span><svg class="dot"><path d="M0 1h4L2 4z"/></svg>
  <svg class="rm sh2"><use href="#rma"/></svg><span class="lsp">帮助(mbbz)</span><svg class="dot"><path d="M0 1h4L2 4z"/></svg>
 </div>
 <div class="frame">
  <div class="tblwrap"><table class="table cad-table"><thead><tr><th>原名称</th><th>名称</th><th>颜色</th><th>封边</th><th>图层</th><th>纹理</th></tr></thead><tbody>
<tr><td>右侧板</td><td>侧板</td><td>洋红</td><td class="n">1</td><td>右侧板</td><td class="m">RIGHTSIDEBOARD<b>|</b>|10</td></tr>
<tr><td>顶板</td><td>顶板</td><td class="n">255</td><td class="n">1</td><td>顶板</td><td class="m">IN_TOPBOARD<b>|</b>|25</td></tr>
<tr><td>底板</td><td>底板</td><td>青色</td><td class="n">1</td><td>底板</td><td class="m">IN_FLOORBOARD<b>|</b>|20</td></tr>
<tr><td>活动层板</td><td>活层</td><td class="n">180</td><td class="n">1</td><td>横搁板</td><td class="m">SHELFBOARD<b>|</b>|17</td></tr>
<tr><td>脚线</td><td>脚线</td><td class="n">255</td><td class="n">1</td><td>望板</td><td class="m">LEFTSIDEBOARD</td></tr>
<tr><td>封板</td><td>收口</td><td class="n">BYLAYER</td><td class="n">1</td><td>背板</td><td class="m">VERDIVIDEBOARD<b>|</b>|26</td></tr>
<tr><td>前拉条</td><td>前拉条</td><td class="n">255</td><td class="n">1</td><td>横搁板</td><td class="m">SHELFBOARD<b>|</b>|17</td></tr>
<tr><td>前脚线</td><td>脚线</td><td class="n">255</td><td class="n">1</td><td>望板</td><td class="m">LEFTSIDEBOARD</td></tr>
<tr><td>背板</td><td>背板</td><td class="n">30</td><td class="n">0</td><td>背板</td><td class="m">VERDIVIDEBOARD<b>|</b>|26</td></tr>
<tr><td>后脚线</td><td>脚线</td><td class="n">255</td><td class="n">1</td><td>望板</td><td class="m">LOOKBOARD<b>|</b>|33</td></tr>
<tr><td>脚线加固板</td><td>脚线</td><td>洋红</td><td class="n">1</td><td>望板</td><td class="m">LOOKBOARD<b>|</b>|33</td></tr>
<tr><td>左侧板</td><td>侧板</td><td>洋红</td><td class="n">1</td><td>左侧板</td><td class="m">LEFTSIDEBOARD<b>|</b>|9</td></tr>
<tr><td>层板</td><td>层板</td><td>洋红</td><td class="n">1</td><td>横搁板</td><td class="m">SHELFBOARD<b>|</b>|17</td></tr>
<tr><td>十八厘背板</td><td>背板</td><td class="n">40</td><td class="n">1</td><td>背板</td><td class="m">BACKBOARD<b>|</b>|18</td></tr>
<tr><td>活动层板</td><td>活层</td><td class="n">180</td><td class="n">1</td><td>横搁板</td><td class="m">SHELFBOARD<b>|</b>|17</td></tr>
<tr><td>顶封加固板</td><td>顶辅助板</td><td class="n">255</td><td class="n">1</td><td>横搁板</td><td class="m">SHELFBOARD<b>|</b>|17</td></tr>
<tr><td>台面板</td><td>面板</td><td>黄色</td><td class="n">1</td><td>面板</td><td class="m">SHELFBOARD<b>|</b>|17</td></tr>
<tr><td>顶封板</td><td>顶封板</td><td>青色</td><td class="n">1</td><td>望板</td><td class="m">LEFTSIDEBOARD</td></tr>
<tr><td>收口辅助板</td><td>侧收辅助板</td><td class="n">255</td><td class="n">1</td><td>立隔板</td><td class="m">VERDIVIDEBOARD<b>|</b>|26</td></tr>
<tr><td>收口</td><td>见光收口</td><td>青色</td><td class="n">1</td><td>立隔板</td><td class="m">VERDIVIDEBOARD<b>|</b>|26</td></tr>
<tr><td>平板门</td><td>门板</td><td>黄色</td><td class="n">1</td><td>门板</td><td class="m">ROTATE_DOORBOAR...</td></tr>
<tr><td>左开门板</td><td>门板左开</td><td>黄色</td><td class="n">1</td><td>门板</td><td class="m">ROTATE_DOORBOAR...</td></tr>
<tr><td></td><td></td><td></td><td></td><td></td><td></td></tr>
  </tbody></table></div>
  <div class="band"></div>
  <div class="sb"><svg viewBox="0 0 14 9"><path d="M2 7l5-5 5 5"/></svg><div class="th"></div><svg class="dn" viewBox="0 0 14 9"><path d="M2 2l5 5 5-5"/></svg></div>
 </div>
 <button type="button" class="btn save">保存设置</button>
 <div class="dtabs"><span>转换设置</span><span>其它设置</span></div>
</div>
<svg class="position-absolute" width="22" height="32" viewBox="0 0 22 32" aria-hidden="true" id="curs"><path d="M2 2v22l6-5 4 9 4-2-4-9h8z" fill="#fff" stroke="#000" stroke-width="1.300"/></svg>
<script src="https://cdn.jsdelivr.net/npm/bootstrap@5.3.0/dist/js/bootstrap.bundle.min.js"></script>
</body></html>
